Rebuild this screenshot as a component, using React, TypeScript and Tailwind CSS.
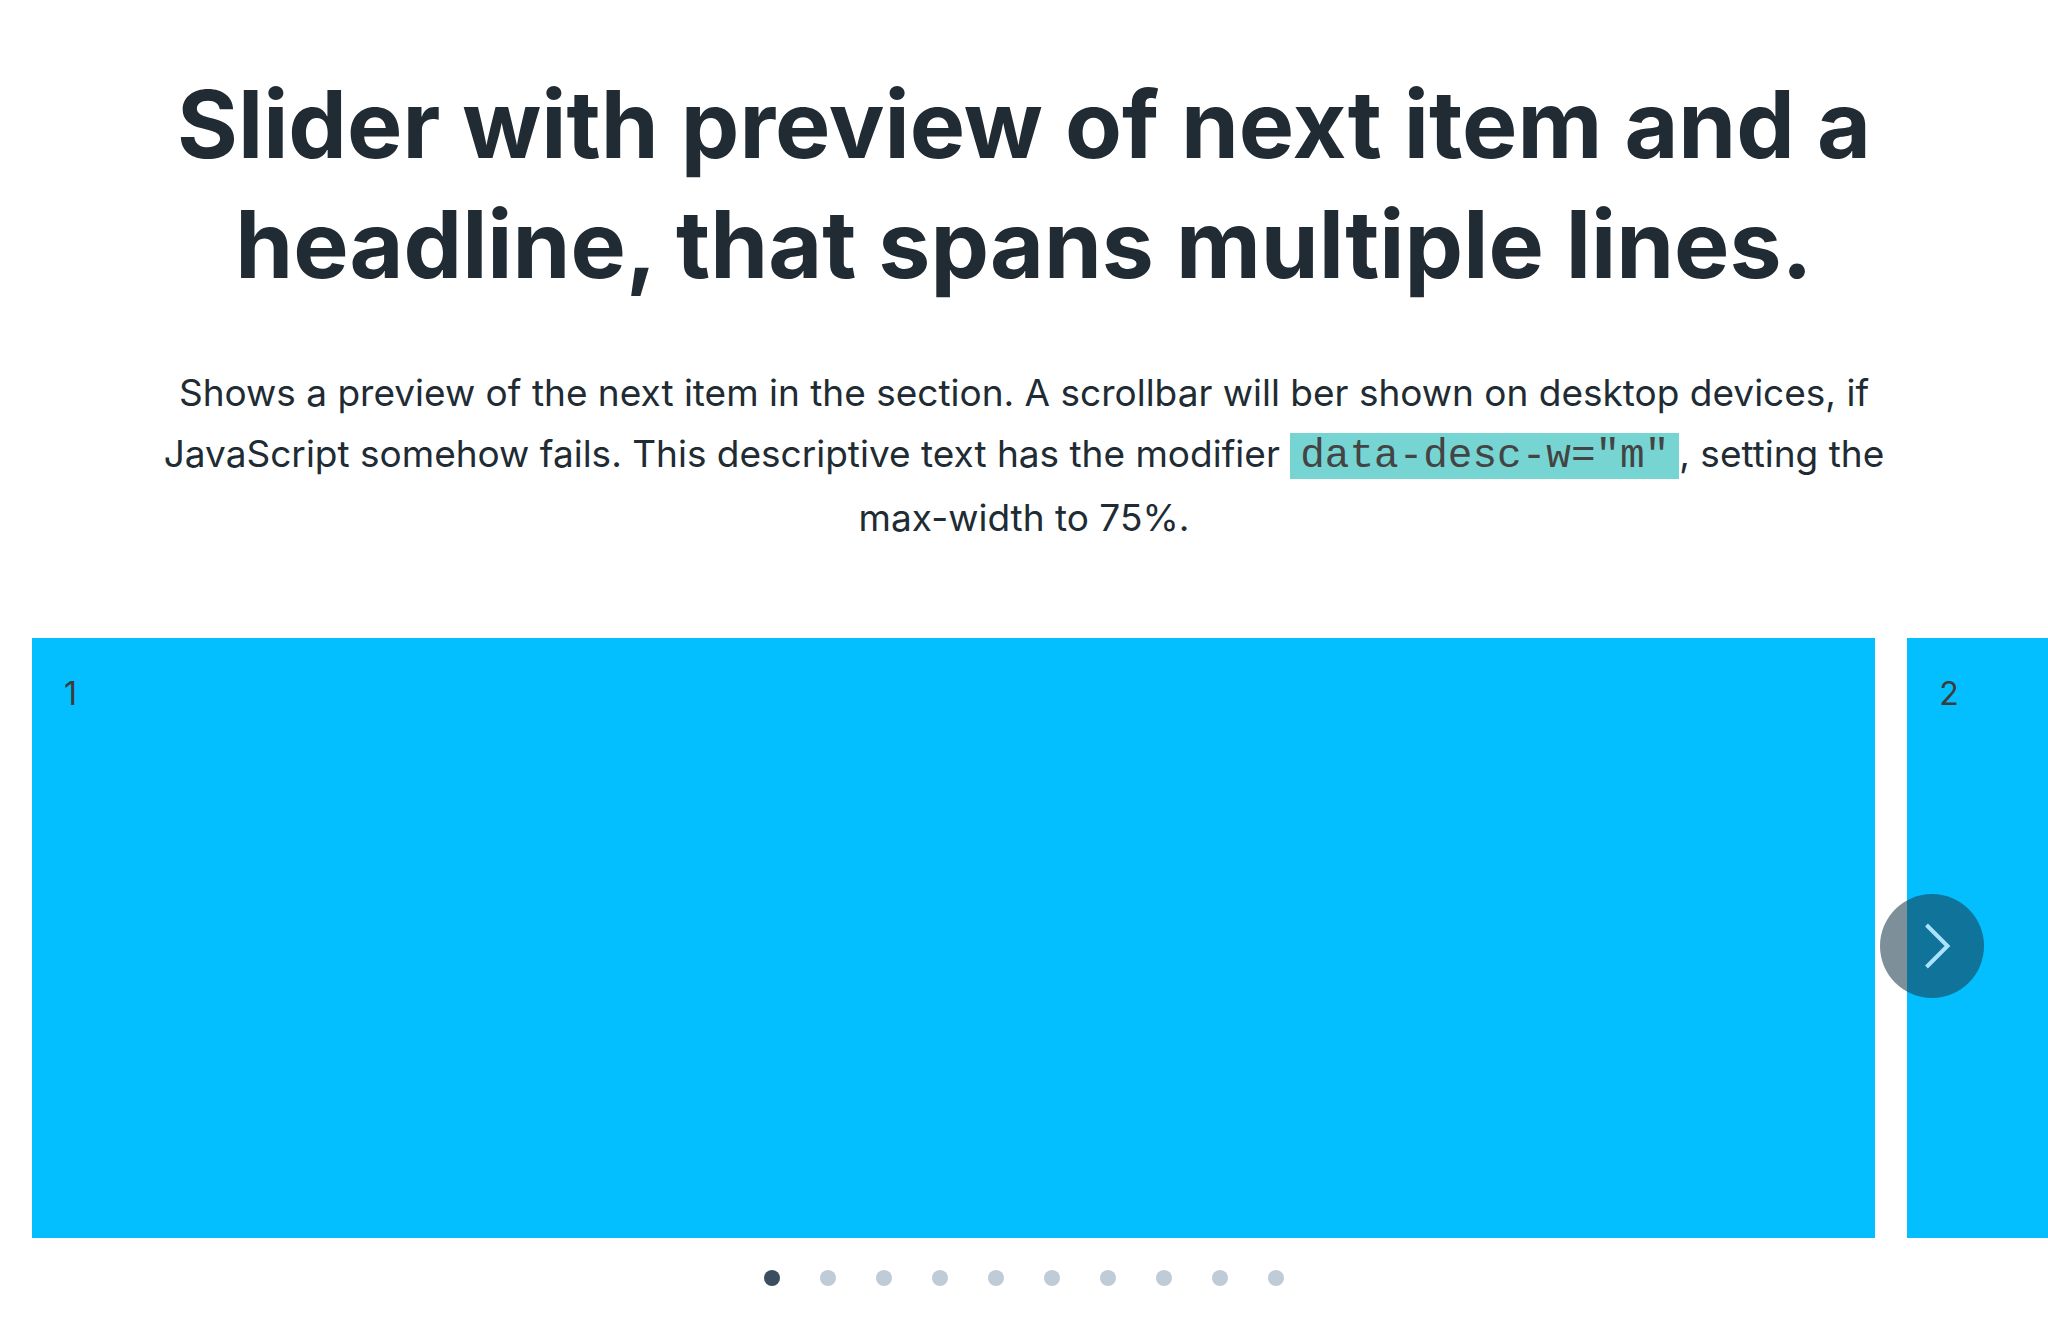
import React, { useState } from "react";

const slides = [1, 2, 3, 4, 5, 6, 7, 8, 9, 10];

export default function App() {
  const [active, setActive] = useState(0);

  return (
    <section className="overflow-hidden bg-white pt-16 font-['Inter',sans-serif] text-[#202b33]">
      <header className="flex flex-col items-center px-40 text-center">
        <h1 className="text-[93px] leading-[120px] font-bold">
          Slider with preview of next item and a headline, that spans multiple lines.
        </h1>
        <p className="mt-[58px] text-[37px] leading-[61px]">
          Shows a preview of the next item in the section. A scrollbar will ber shown on desktop devices, if JavaScript
          somehow fails. This descriptive text has the modifier{" "}
          <code className="bg-[#76d5d2] px-[10px] font-['Liberation_Mono',monospace] text-[41px] text-[#444]">
            data-desc-w="m"
          </code>
          , setting the max-width to 75%.
        </p>
      </header>
      <div className="relative mt-[90px]">
        <ul className="flex gap-8 pl-8">
          {slides.slice(active, active + 2).map((n) => (
            <li
              key={n}
              className="h-[600px] w-[90vw] shrink-0 bg-[#03bfff] p-8 text-[32px] leading-[48px] text-[#3c3c3c]"
            >
              {n}
            </li>
          ))}
        </ul>
        <button
          type="button"
          aria-label="Next slide"
          onClick={() => setActive((active + 1) % slides.length)}
          className="absolute top-[256px] right-16 size-[104px] rounded-full bg-[#1a3a4c]/57"
        >
          <svg viewBox="0 0 104 104" className="size-full" fill="none" stroke="#abe2fe" strokeWidth="4">
            <path d="M46.5 31l21 21-21 21" />
          </svg>
        </button>
      </div>
      <nav aria-label="Slides" className="mt-8 flex justify-center gap-10">
        {slides.map((n, i) => (
          <button
            key={n}
            type="button"
            aria-label={`Slide ${n}`}
            onClick={() => setActive(i)}
            className={i === active ? "size-4 rounded-full bg-[#3b4d5f]" : "size-4 rounded-full bg-[#c0cbd8]"}
          />
        ))}
      </nav>
    </section>
  );
}
